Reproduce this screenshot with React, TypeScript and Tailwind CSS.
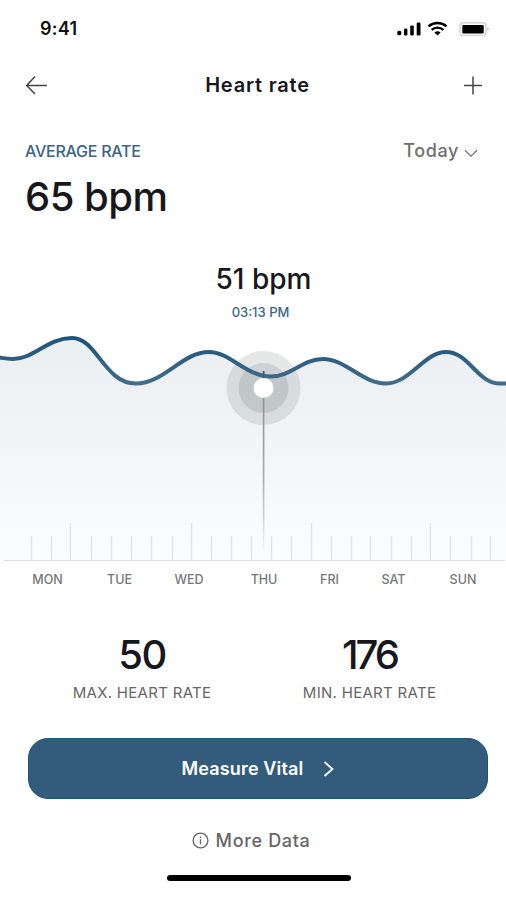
const INTER = "font-['Inter','Open_Sans',sans-serif]";

interface Day {
  label: string;
  className: string;
}

// day names are not evenly spaced under the ruler
const days: Day[] = [
  { label: "MON", className: "w-[76px] ml-[9.5px]" },
  { label: "TUE", className: "w-[68px]" },
  { label: "WED", className: "w-[71px]" },
  { label: "THU", className: "w-[79px]" },
  { label: "FRI", className: "w-[52px]" },
  { label: "SAT", className: "w-[76px]" },
  { label: "SUN", className: "w-[63px]" },
];

const ticks = [
  31, 51, 70, 91, 111, 131, 151, 172, 191, 211, 231, 251, 271, 291, 311, 331,
  351, 370, 391, 411, 430, 450, 471, 490,
];

const WAVE =
  "M-4 27 C3 28 7 29.2 13 29 C34 29 47 8 72 8 C97 8 104 53.5 136 53.5 C164 53.5 182 22 209 22 C230 22 246 46.5 271 46.5 C291 46.5 302 29 323 29 C346 29 362 53.5 386 53.5 C410 53.5 424 22 446 22 C469 22 477 53.5 500 53.5 L510 53.5";

const StatusBar = () => (
  <div className="flex h-[58px] items-center justify-between pl-10 pr-[17px]">
    <span className="text-[18px] leading-6 font-semibold tracking-[0.3px] text-[#111]">
      9:41
    </span>
    <svg width="93" height="16" viewBox="0 0 93 16" fill="none">
      <rect x="1.3" y="9.8" width="4" height="4.5" rx="1.6" fill="#000" />
      <rect x="8" y="7.5" width="3.4" height="7" rx="1.2" fill="#000" />
      <rect x="14.2" y="4.5" width="3.6" height="10" rx="1.2" fill="#000" />
      <rect x="20.7" y="1.5" width="3.8" height="13" rx="1.2" fill="#000" />
      <path d="M32.5 5.4a13.5 13.5 0 0 1 18 0" stroke="#000" strokeWidth="2.5" />
      <path d="M35.6 8.9a8.7 8.7 0 0 1 11.8 0" stroke="#000" strokeWidth="2.3" />
      <path d="M38.4 11.6a4.6 4.6 0 0 1 6.2 0l-3.1 2.9z" fill="#000" />
      <rect x="64" y="1.8" width="26" height="12.6" rx="3.2" stroke="#d2d2d2" strokeWidth="1.4" />
      <rect x="66.3" y="4" width="21.4" height="8.4" rx="1.2" fill="#000" />
      <path d="M91.4 6.2v3.8q1.4-.6 1.4-1.9t-1.4-1.9z" fill="#bbb" />
    </svg>
  </div>
);

const Header = () => (
  <div className="flex h-[54px] items-center justify-between pl-[25px] pr-[23px]">
    <button>
      <svg width="23" height="20" viewBox="0 0 23 20" fill="none" stroke="#444" strokeWidth="1.5">
        <path d="M22 10.5H2M10 1.5l-8.3 9L10 19" />
      </svg>
    </button>
    <h1 className="pl-1 text-[20px] leading-6 font-semibold tracking-[0.8px] text-[#17171d]">
      Heart rate
    </h1>
    <button>
      <svg width="20" height="20" viewBox="0 0 20 20" fill="none" stroke="#444" strokeWidth="1.5">
        <path d="M10 1.5v18M1 10.5h18" />
      </svg>
    </button>
  </div>
);

const HeartChart = () => (
  <svg className="mt-2.5 block" width="506" height="232" viewBox="0 0 506 232" fill="none">
    <defs>
      <linearGradient id="area" x1="0" y1="8" x2="0" y2="231" gradientUnits="userSpaceOnUse">
        <stop offset="0" stopColor="#eaeff2" />
        <stop offset="0.4" stopColor="#f1f3f5" />
        <stop offset="0.8" stopColor="#f9fafc" />
        <stop offset="1" stopColor="#fbfcfd" />
      </linearGradient>
      <linearGradient id="line" x1="0" y1="8" x2="0" y2="54" gradientUnits="userSpaceOnUse">
        <stop offset="0" stopColor="#1d5479" />
        <stop offset="1" stopColor="#426c8b" />
      </linearGradient>
      <linearGradient id="needle" x1="0" y1="41" x2="0" y2="224" gradientUnits="userSpaceOnUse">
        <stop offset="0" stopColor="#85898c" />
        <stop offset="0.6" stopColor="#a8abae" />
        <stop offset="1" stopColor="#a8abae" stopOpacity="0" />
      </linearGradient>
    </defs>
    <path d={`${WAVE} V231 H-4 Z`} fill="url(#area)" />
    {ticks.map((x, i) => (
      <path
        key={x}
        d={`M${x + 0.5} ${i % 6 === 2 ? 193 : 206}V230`}
        stroke="#e3e4e1"
        strokeWidth="1.3"
      />
    ))}
    <path d="M4 230.5H505" stroke="#dededc" strokeWidth="1.2" />
    <circle cx="263.5" cy="58" r="37" fill="#404c4c" fillOpacity="0.13" />
    <circle cx="263.5" cy="58" r="25" fill="#404c4c" fillOpacity="0.14" />
    <path d={WAVE} stroke="url(#line)" strokeWidth="4" />
    <rect x="262.8" y="41" width="1.6" height="183" fill="url(#needle)" />
    <path d="M263.6 41v8" stroke="#355a72" strokeWidth="1.6" />
    <circle cx="263.5" cy="58" r="10" fill="#fff" />
  </svg>
);

const App = () => {
  return (
    <div className={`h-[900px] w-[506px] overflow-hidden bg-white ${INTER}`}>
      <StatusBar />
      <Header />

      <div className="mt-[27px] flex h-6 items-center justify-between pl-[25px] pr-[28px]">
        <span className="text-[16px] leading-6 font-medium tracking-[-0.25px] text-[#3a6585]">
          AVERAGE RATE
        </span>
        <button className="flex items-center gap-[5px] text-[18px] leading-6 font-medium tracking-[0.6px] text-[#6e6e6e]">
          Today
          <svg className="mt-1" width="14" height="9" viewBox="0 0 14 9" fill="none" stroke="#777" strokeWidth="1.3">
            <path d="M1 1.2l6 6 6-6" />
          </svg>
        </button>
      </div>
      <p className="mt-3.5 pl-[25px] text-[40px] leading-10 font-medium tracking-[-0.5px] text-[#17171d]">
        65 bpm
      </p>

      <p className="mt-[46px] pl-[21px] text-center text-[28px] leading-8 font-medium text-[#17171d]">
        51 bpm
      </p>
      <p className="mt-[9px] pl-[15px] text-center text-[13px] leading-4 font-medium text-[#3a6585]">
        03:13 PM
      </p>

      <HeartChart />

      <div className="mt-2.5 flex text-center text-[12.5px] leading-4 font-medium text-[#777]">
        {days.map((day) => (
          <span key={day.label} className={day.className}>
            {day.label}
          </span>
        ))}
      </div>

      <div className="mt-[47px] flex pl-[28px] text-center">
        <div className="w-[228px]">
          <p className="text-[40px] leading-10 font-medium tracking-[-1.5px] text-[#17171d]">50</p>
          <p className="mt-2.5 text-[15px] leading-4 tracking-[0.3px] text-[#666]">MAX. HEART RATE</p>
        </div>
        <div className="w-[227px]">
          <p className="text-[40px] leading-10 font-medium tracking-[-3px] text-[#17171d]">176</p>
          <p className="mt-2.5 text-[15px] leading-4 tracking-[0.3px] text-[#666]">MIN. HEART RATE</p>
        </div>
      </div>

      <button className="mt-[37px] ml-7 flex h-[61px] w-[460px] items-center justify-center gap-5 rounded-[20px] border border-[#1f5375] bg-[#335b7b] text-[18px] font-semibold tracking-[0.15px] text-white">
        Measure Vital
        <svg width="11" height="16" viewBox="0 0 11 16" fill="none" stroke="#fff" strokeWidth="1.8">
          <path d="M1.5 1l8 7-8 7" />
        </svg>
      </button>

      <button className="mt-[31px] flex h-5 w-full items-center justify-center gap-[7px] pr-1 text-[18px] font-medium tracking-[0.65px] text-[#666]">
        <svg width="17" height="17" viewBox="0 0 17 17" fill="none" stroke="#666" strokeWidth="1.3">
          <circle cx="8.5" cy="8.5" r="7.4" />
          <path d="M8.5 7.2v5M8.5 4.6v1.5" />
        </svg>
        More Data
      </button>
      <div className="mt-[25px] ml-[167px] h-1.5 w-[184px] rounded-full bg-black" />
    </div>
  );
};

export default App;
